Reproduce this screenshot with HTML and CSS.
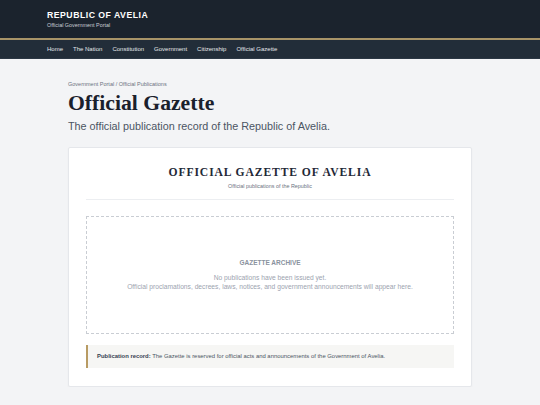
FILE: index.html
```html
<!DOCTYPE html>
<html lang="en">
<head>
<meta charset="utf-8">
<title>Official Gazette</title>
<link rel="stylesheet" href="styles.css">
</head>
<body>
<header class="site-header">
  <div class="header-inner">
    <div class="brand-title">REPUBLIC OF AVELIA</div>
    <div class="brand-sub">Official Government Portal</div>
  </div>
</header>
<nav class="site-nav">
  <div class="nav-inner">
    <a href="#">Home</a>
    <a href="#">The Nation</a>
    <a href="#">Constitution</a>
    <a href="#">Government</a>
    <a href="#">Citizenship</a>
    <a href="#">Official Gazette</a>
  </div>
</nav>
<main class="main">
  <div class="breadcrumb">Government Portal / Official Publications</div>
  <h1 class="page-title">Official Gazette</h1>
  <p class="lead">The official publication record of the Republic of Avelia.</p>
  <section class="card">
    <div class="card-head">
      <h2 class="card-title">OFFICIAL GAZETTE OF AVELIA</h2>
      <div class="card-sub">Official publications of the Republic</div>
    </div>
    <div class="archive">
      <div class="archive-title">GAZETTE ARCHIVE</div>
      <div class="archive-text">No publications have been issued yet.<br>Official proclamations, decrees, laws, notices, and government announcements will appear here.</div>
    </div>
    <div class="notice"><strong>Publication record:</strong> The Gazette is reserved for official acts and announcements of the Government of Avelia.</div>
  </section>
</main>
</body>
</html>
```
FILE: styles.css
```css
* { box-sizing: border-box; }
html, body { margin: 0; padding: 0; }
body {
  background: #f3f4f6;
  font-family: "Liberation Sans", Arial, sans-serif;
  color: #1f2937;
}
.site-header {
  background: #1b232d;
  height: 40px;
  border-bottom: 2px solid #a89468;
}
.header-inner {
  padding: 10px 47px 0;
}
.brand-title {
  color: #ffffff;
  font-weight: bold;
  font-size: 8.7px;
  letter-spacing: 0.5px;
  line-height: 10px;
}
.brand-sub {
  color: #c9ced6;
  font-size: 5.4px;
  line-height: 6px;
  margin-top: 2px;
}
.site-nav {
  background: #222d39;
  height: 19px;
  border-bottom: 1px solid #2b3744;
}
.nav-inner {
  display: flex;
  gap: 10px;
  padding: 0 47px;
  height: 100%;
  align-items: center;
}
.nav-inner a {
  color: #e5e7eb;
  text-decoration: none;
  font-size: 6px;
  line-height: 8px;
}
.main {
  width: 404px;
  margin: 0 auto;
  padding-top: 22px;
}
.breadcrumb {
  font-size: 5.5px;
  color: #6b7280;
  line-height: 7px;
}
.page-title {
  font-family: "Liberation Serif", Georgia, serif;
  font-weight: bold;
  font-size: 21.7px;
  margin: 3px 0 0;
  line-height: 24px;
  color: #1a202c;
}
.lead {
  font-size: 10.8px;
  color: #4b5563;
  margin: 5px 0 0;
  line-height: 13px;
}
.card {
  margin-top: 14px;
  background: #ffffff;
  border: 1px solid #e5e7eb;
  border-radius: 2px;
  box-shadow: 0 1px 2px rgba(0,0,0,0.04);
  padding: 17px 17px 18px;
}
.card-head {
  text-align: center;
  border-bottom: 1px solid #eceef1;
  padding-bottom: 9px;
}
.card-title {
  font-family: "Liberation Serif", "Times New Roman", serif;
  font-weight: bold;
  font-size: 11.6px;
  letter-spacing: 0.9px;
  margin: 0;
  line-height: 15px;
  color: #1f2937;
}
.card-sub {
  font-size: 5.4px;
  color: #6b7280;
  margin-top: 3px;
  line-height: 7px;
}
.archive {
  margin-top: 16px;
  border: 1px dashed #c9cdd3;
  height: 118px;
  display: flex;
  flex-direction: column;
  align-items: center;
  justify-content: center;
  text-align: center;
}
.archive-title {
  font-size: 6.5px;
  font-weight: bold;
  color: #8a929e;
}
.archive-text {
  margin-top: 8px;
  font-size: 6.7px;
  line-height: 8.5px;
  color: #9ca3af;
}
.notice {
  margin-top: 11px;
  background: #f6f6f4;
  border-left: 2px solid #b89b63;
  padding: 8px 9px;
  font-size: 5.9px;
  line-height: 7px;
  color: #4b5563;
}
.notice strong { color: #374151; }
```
